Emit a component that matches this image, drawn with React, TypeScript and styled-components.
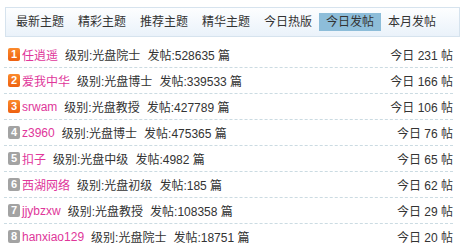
import React from "react";
import styled, { createGlobalStyle } from "styled-components";

const Global = createGlobalStyle`
  html, body { margin: 0; padding: 0; background: #fff; }
  body { font-family: "Liberation Sans", Arial, "Noto Sans CJK SC", sans-serif; font-size: 12px; color: #333; }
`;

const Wrap = styled.div`
  padding: 7px 0 0 4px;
  width: 454px;
`;

const TabBar = styled.div`
  margin-left: 1px;
  width: 450px;
  height: 28px;
  display: flex;
  align-items: center;
  padding-left: 3px;
  border: 1px solid #d6e3ee;
  background: linear-gradient(#fdfeff, #eaf2fa);
  box-sizing: content-box;
`;

const Tab = styled.div<{ $active?: boolean }>`
  height: 18px;
  line-height: 18px;
  padding: 0 7px;
  white-space: nowrap;
  color: #333;
  background: ${(p) => (p.$active ? "#8dbdd9" : "transparent")};
`;

const List = styled.div`
  margin-top: 5px;
  width: 449px;
`;

const Row = styled.div`
  height: 25px;
  display: flex;
  align-items: center;
  border-bottom: 1px dashed #cbdbe2;
  padding-left: 4px;
`;

const Badge = styled.span<{ $top: boolean }>`
  width: 12px;
  height: 13px;
  border-radius: 2px;
  background: ${(p) => (p.$top ? "linear-gradient(#fb8a2c, #ee6010)" : "#a3a3a3")};
  color: #fff;
  font-weight: bold;
  font-size: 11px;
  line-height: 13px;
  text-align: center;
  margin-right: 2px;
  flex: none;
`;

const Name = styled.span`
  color: #e0369a;
  font-size: 12px;
  margin-right: 7px;
`;

const Info = styled.span`
  margin-right: 7px;
`;

const Today = styled.span`
  margin-left: auto;
`;

const tabs = ["最新主题", "精彩主题", "推荐主题", "精华主题", "今日热版", "今日发帖", "本月发帖"];

const rows = [
  ["任逍遥", "光盘院士", "528635", "231"],
  ["爱我中华", "光盘博士", "339533", "166"],
  ["srwam", "光盘教授", "427789", "106"],
  ["z3960", "光盘博士", "475365", "76"],
  ["扣子", "光盘中级", "4982", "65"],
  ["西湖网络", "光盘初级", "185", "62"],
  ["jjybzxw", "光盘教授", "108358", "29"],
  ["hanxiao129", "光盘院士", "18751", "20"],
];

export default function App() {
  return (
    <>
      <Global />
      <Wrap>
        <TabBar>
          {tabs.map((t) => (
            <Tab key={t} $active={t === "今日发帖"}>{t}</Tab>
          ))}
        </TabBar>
        <List>
          {rows.map((r, i) => (
            <Row key={r[0]}>
              <Badge $top={i < 3}>{i + 1}</Badge>
              <Name>{r[0]}</Name>
              <Info>级别:{r[1]}</Info>
              <Info>发帖:{r[2]} 篇</Info>
              <Today>今日 {r[3]} 帖</Today>
            </Row>
          ))}
        </List>
      </Wrap>
    </>
  );
}
